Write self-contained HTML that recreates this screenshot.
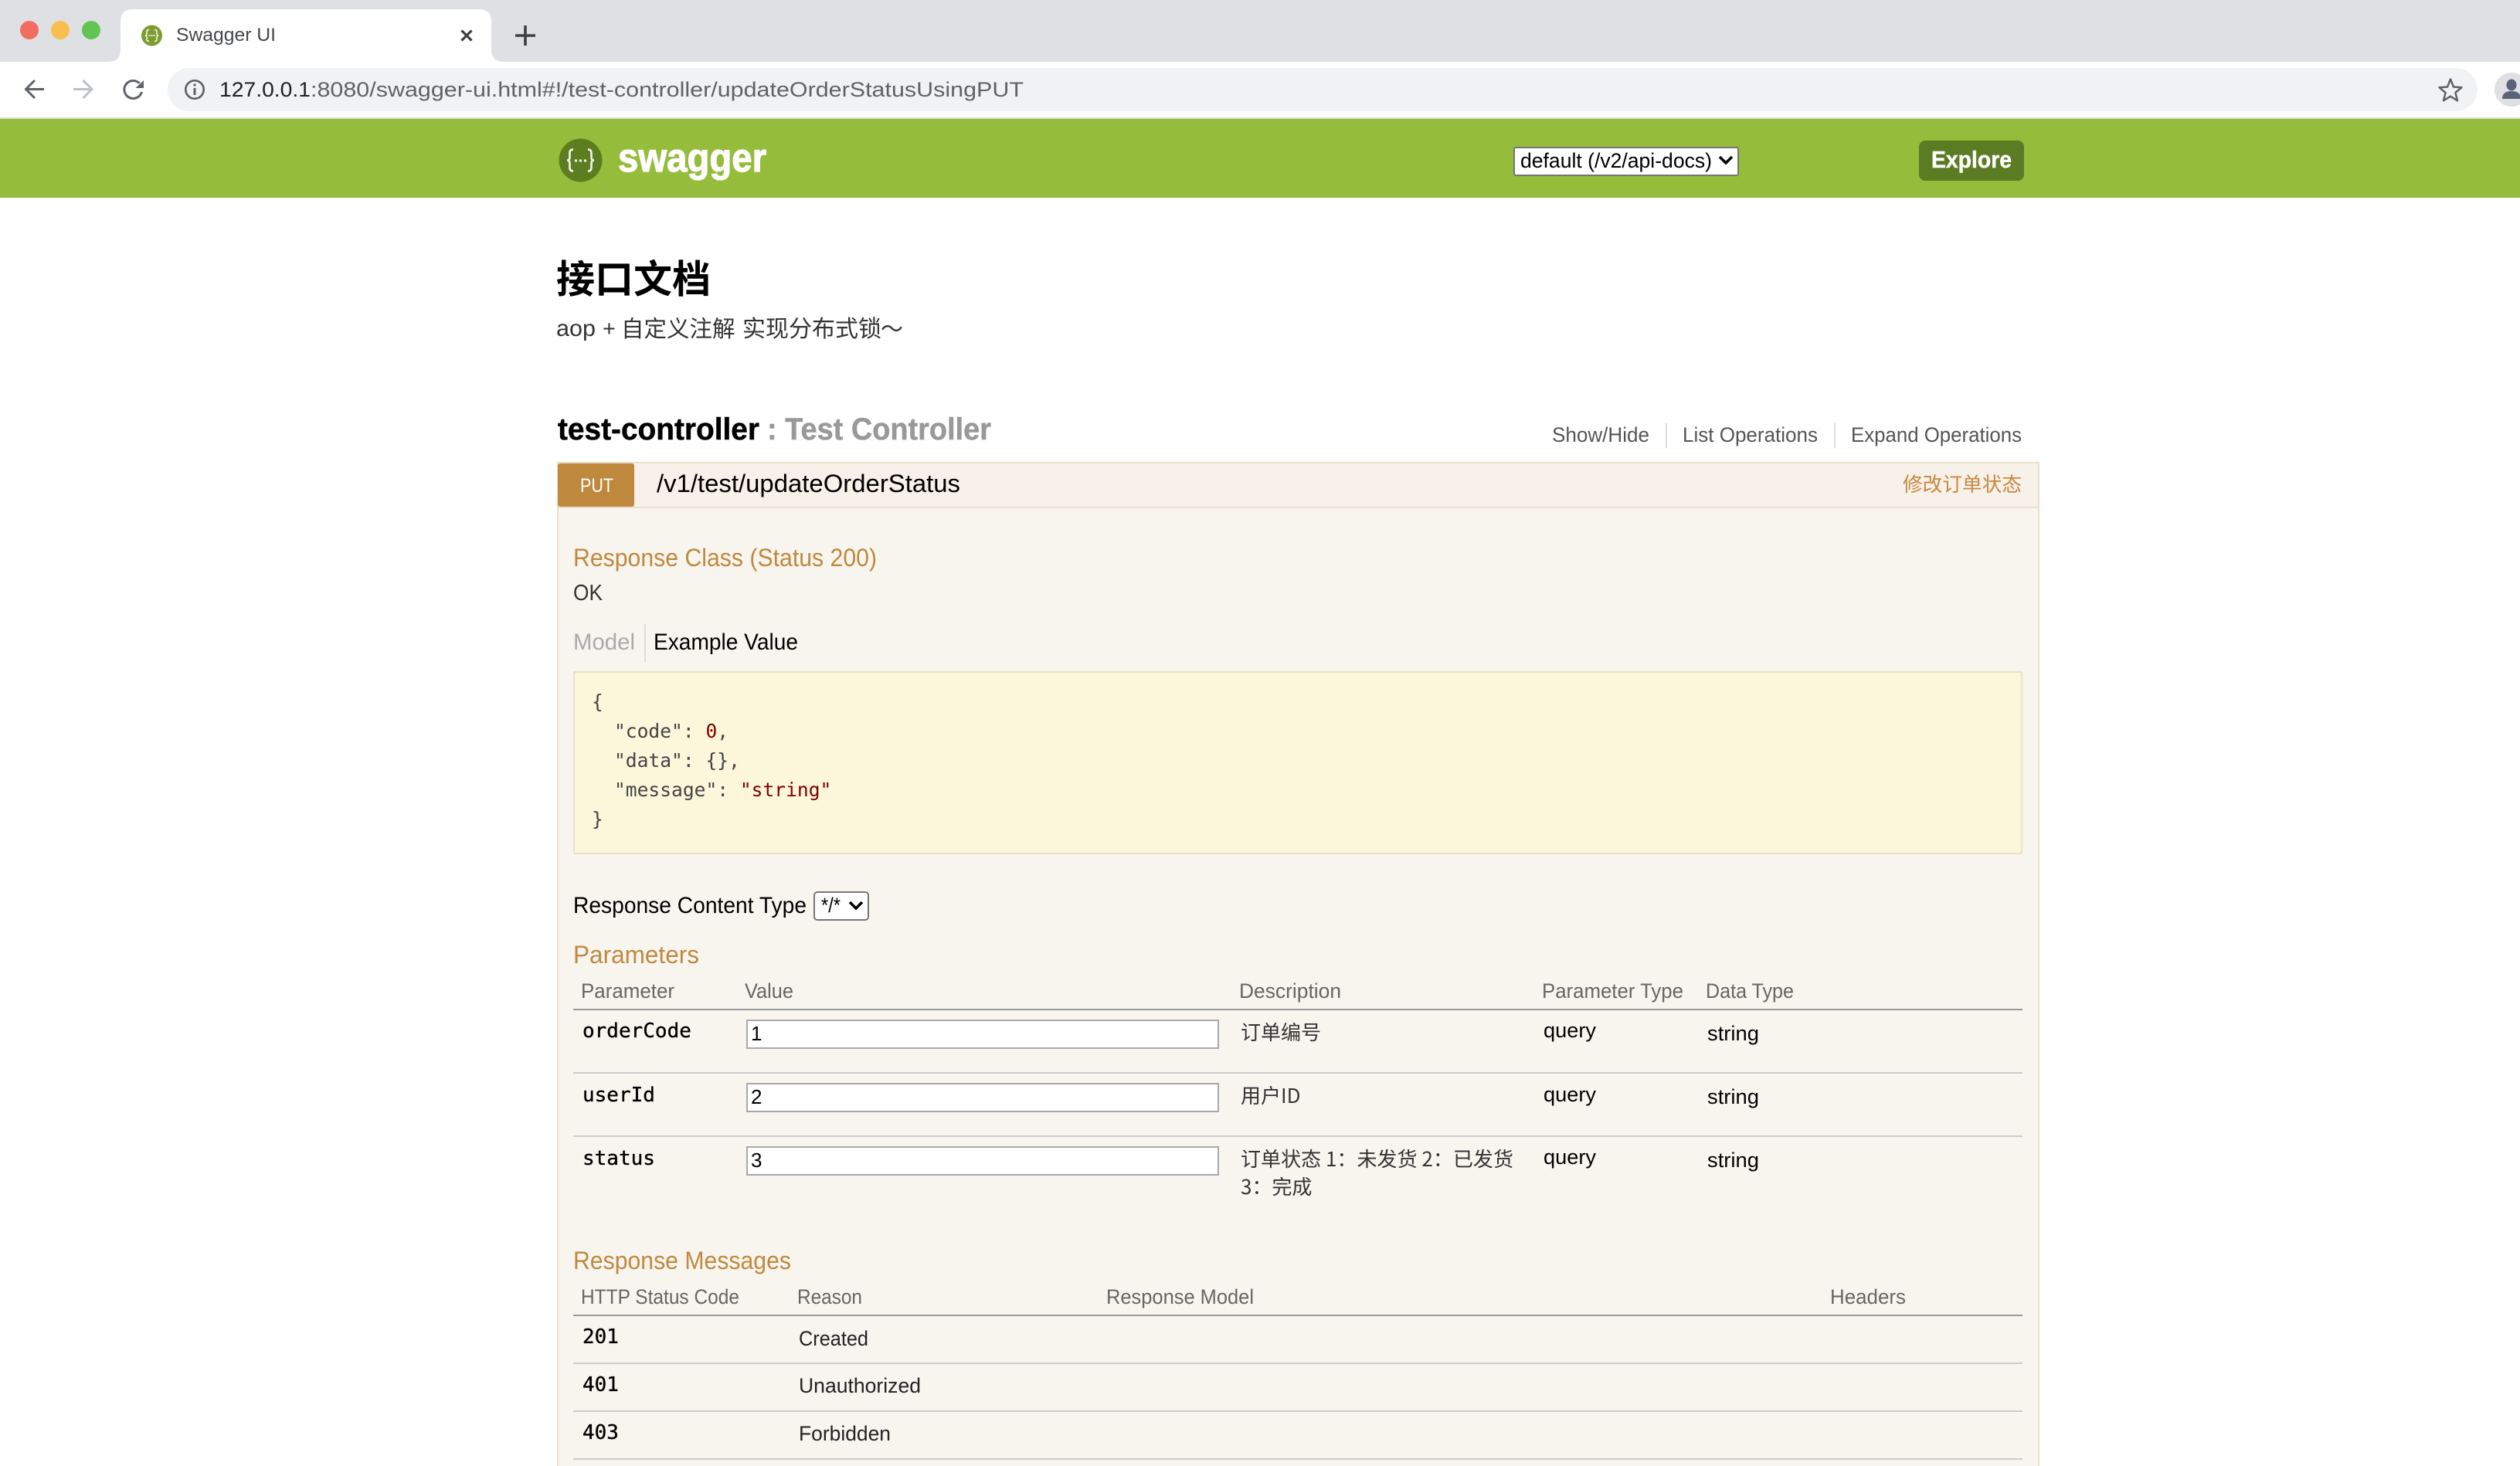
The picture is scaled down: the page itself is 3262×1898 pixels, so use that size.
<!DOCTYPE html>
<html lang="zh">
<head>
<meta charset="utf-8">
<title>Swagger UI</title>
<style>
html,body{margin:0;padding:0;background:#fff;width:3262px;height:1898px;overflow:hidden}
svg{display:block}
text{white-space:pre}
.s{font-family:"Liberation Sans","Noto Sans CJK SC",sans-serif}
.m{font-family:"DejaVu Sans Mono","Liberation Mono",monospace}
.c{font-family:"Noto Sans CJK SC","Liberation Sans",sans-serif}
.b{font-weight:700}
.h{font-size:32px;fill:#c0893f}
.th{font-size:27px;fill:#666}
.td{font-size:27px;fill:#222}
.cj{font-size:26px;fill:#333}
.code{font-size:24.6px;fill:#444}
.p{font-size:27px;fill:#000}
.mn{font-size:26px;fill:#000;stroke:#000;stroke-width:.35px}
.lnk{font-size:27px;fill:#555}
</style>
</head>
<body>
<svg xmlns="http://www.w3.org/2000/svg" width="3262" height="1898" viewBox="0 0 3262 1898">
<!-- browser chrome -->
<rect width="3262" height="80" fill="#dfe0e4"/>
<rect y="80" width="3262" height="72" fill="#fff"/>
<rect y="152" width="3262" height="2" fill="#dcdcdf"/>
<circle cx="38" cy="39" r="12" fill="#f26d60"/>
<circle cx="78" cy="39" r="12" fill="#f8bf4e"/>
<circle cx="118" cy="39" r="12" fill="#61c554"/>
<path d="M140 80Q156 80 156 64V28Q156 12 172 12H620Q636 12 636 28V64Q636 80 652 80Z" fill="#fff"/>
<circle cx="196.500" cy="46" r="13.500" fill="#7d9d2f"/>
<path d="M193 38.500q-3 0-3 2.500v2.500q0 2.500-2 2.500q2 0 2 2.500v2.500q0 2.500 3 2.500M200 38.500q3 0 3 2.500v2.500q0 2.500 2 2.500q-2 0-2 2.500v2.500q0 2.500-3 2.500" fill="none" stroke="#fff" stroke-width="1.400"/>
<circle cx="193.500" cy="46" r="1" fill="#fff"/><circle cx="196.500" cy="46" r="1" fill="#fff"/><circle cx="199.500" cy="46" r="1" fill="#fff"/>
<text class="s" x="228" y="53" font-size="24" fill="#45474a" textLength="129" lengthAdjust="spacingAndGlyphs">Swagger UI</text>
<path d="M597.500 39.500L610.500 52.500M610.500 39.500L597.500 52.500" stroke="#3c4043" stroke-width="3.200" fill="none"/>
<path d="M680 33V59M667 46H693" stroke="#3c4043" stroke-width="3.600" fill="none"/>
<!-- nav -->
<path d="M57 115.500H34M45 104L33.500 115.500L45 127" stroke="#5f6368" stroke-width="3" fill="none"/>
<path d="M95 115.500H118.500M107.500 104L119 115.500L107.500 127" stroke="#bdc1c6" stroke-width="3" fill="none"/>
<path d="M180.500 107.800A11.500 11.500 0 1 0 183.500 119" stroke="#5f6368" stroke-width="3" fill="none"/>
<path d="M186 104V114H175.500Z" fill="#5f6368"/>
<rect x="217" y="88" width="2990" height="56" rx="28" fill="#f1f2f4"/>
<circle cx="252" cy="116" r="11.700" fill="none" stroke="#5f6368" stroke-width="2.700"/>
<rect x="250.500" y="114" width="3" height="9" fill="#5f6368"/><rect x="250.500" y="108.500" width="3" height="3" fill="#5f6368"/>
<text class="s" x="284" y="125" font-size="27" fill="#202124" textLength="118" lengthAdjust="spacingAndGlyphs">127.0.0.1</text>
<text class="s" x="402" y="125" font-size="27" fill="#5f6368" textLength="923" lengthAdjust="spacingAndGlyphs">:8080/swagger-ui.html#!/test-controller/updateOrderStatusUsingPUT</text>
<path d="M3172 102.500L3176 112.500L3186.500 113.200L3178.400 120L3181 130.300L3172 124.700L3163 130.300L3165.600 120L3157.500 113.200L3168 112.500Z" fill="none" stroke="#5f6368" stroke-width="2.500" stroke-linejoin="round"/>
<circle cx="3251" cy="116" r="22" fill="#dfe0e4"/>
<ellipse cx="3251" cy="110" rx="6.500" ry="7.500" fill="#5a6478"/>
<path d="M3239 128Q3239 118 3251 118Q3263 118 3263 128Z" fill="#5a6478"/>
<!-- header bar -->
<rect y="154" width="3262" height="102" fill="#95bc3b"/>
<circle cx="751.500" cy="207.500" r="28" fill="#5c7d20"/>
<path d="M742 193.500q-4.500 0-4.500 4.500v5.500q0 4-3.500 4q3.500 0 3.500 4v5.500q0 4.500 4.500 4.500M761 193.500q4.500 0 4.500 4.500v5.500q0 4 3.500 4q-3.500 0-3.500 4v5.500q0 4.500-4.500 4.500" fill="none" stroke="#edf2e6" stroke-width="2.700"/>
<circle cx="745.500" cy="208" r="1.700" fill="#edf2e6"/><circle cx="751.500" cy="208" r="1.700" fill="#edf2e6"/><circle cx="757.500" cy="208" r="1.700" fill="#edf2e6"/>
<text class="s b" x="800" y="222" font-size="52" fill="#fff" stroke="#fff" stroke-width="1.200" textLength="192" lengthAdjust="spacingAndGlyphs">swagger</text>
<rect x="1960" y="191" width="290" height="36" rx="2" fill="#fff" stroke="#767676" stroke-width="2"/>
<text class="s" x="1968" y="217" font-size="27" fill="#000" textLength="248" lengthAdjust="spacingAndGlyphs">default (/v2/api-docs)</text>
<path d="M2226 203L2234 211L2242 203" fill="none" stroke="#000" stroke-width="3.500"/>
<rect x="2484" y="182" width="136" height="52" rx="8" fill="#5b7c22"/>
<text class="s b" x="2500" y="217" font-size="31" fill="#fff" stroke="#fff" stroke-width=".5" textLength="104" lengthAdjust="spacingAndGlyphs">Explore</text>
<!-- title -->
<text class="c b" x="720" y="379" font-size="50" fill="#000">接口文档</text>
<text class="s" x="720" y="435" font-size="30" fill="#333" textLength="51" lengthAdjust="spacingAndGlyphs">aop</text>
<text class="s" x="780" y="435" font-size="29" fill="#333">+</text>
<text class="c" x="804" y="436" font-size="29.500" fill="#333">自定义注解</text>
<text class="c" x="961" y="436" font-size="30" fill="#333">实现分布式锁</text>
<text class="c" x="1140" y="436" font-size="29" fill="#333">～</text>
<!-- resource heading -->
<text class="s b" x="722" y="569" font-size="40" fill="#000" stroke="#000" stroke-width=".5" textLength="261" lengthAdjust="spacingAndGlyphs">test-controller</text>
<text class="s b" x="993" y="569" font-size="40" fill="#999" stroke="#999" stroke-width=".5" textLength="290" lengthAdjust="spacingAndGlyphs">: Test Controller</text>
<text class="s lnk" x="2009" y="572" textLength="126" lengthAdjust="spacingAndGlyphs">Show/Hide</text>
<rect x="2156" y="548" width="2" height="32" fill="#ddd"/>
<text class="s lnk" x="2178" y="572" textLength="175" lengthAdjust="spacingAndGlyphs">List Operations</text>
<rect x="2374" y="548" width="2" height="32" fill="#ddd"/>
<text class="s lnk" x="2396" y="572" textLength="221" lengthAdjust="spacingAndGlyphs">Expand Operations</text>
<!-- panel -->
<rect x="721" y="598" width="1919" height="1302" fill="#ecdfcb"/>
<rect x="723" y="658" width="1915" height="1240" fill="#f8f5ef"/>
<rect x="723" y="600" width="1915" height="56" fill="#f8f1ea"/>
<rect x="722" y="600" width="99" height="56" rx="3" fill="#be883d"/>
<text class="s" x="751" y="637" font-size="25" fill="#fff" textLength="43" lengthAdjust="spacingAndGlyphs">PUT</text>
<text class="s" x="850" y="637" font-size="32" fill="#000" textLength="393" lengthAdjust="spacingAndGlyphs">/v1/test/updateOrderStatus</text>
<text class="c" x="2463" y="636" font-size="25.700" fill="#c5893f">修改订单状态</text>
<!-- response class -->
<text class="s h" x="742" y="733" textLength="393" lengthAdjust="spacingAndGlyphs">Response Class (Status 200)</text>
<text class="s" x="742" y="777" font-size="29" fill="#333" textLength="38" lengthAdjust="spacingAndGlyphs">OK</text>
<text class="s" x="742" y="841" font-size="30" fill="#aaa" textLength="80" lengthAdjust="spacingAndGlyphs">Model</text>
<rect x="834" y="808" width="2" height="49" fill="#ddd"/>
<text class="s" x="846" y="841" font-size="30" fill="#000" textLength="187" lengthAdjust="spacingAndGlyphs">Example Value</text>
<rect x="743" y="870" width="1874" height="235" fill="#fcf6db" stroke="#e8e2c8" stroke-width="2"/>
<text class="m code" x="766" y="917">{</text>
<text class="m code" x="795" y="955">"code": <tspan fill="#800000">0</tspan>,</text>
<text class="m code" x="795" y="993">"data": {},</text>
<text class="m code" x="795" y="1031">"message": <tspan fill="#800000">"string"</tspan></text>
<text class="m code" x="766" y="1069">}</text>
<text class="s" x="742" y="1182" font-size="30" fill="#000" textLength="302" lengthAdjust="spacingAndGlyphs">Response Content Type</text>
<rect x="1054" y="1155" width="70" height="36" rx="4" fill="#fff" stroke="#767676" stroke-width="2"/>
<text class="s" x="1063" y="1181" font-size="27" fill="#000" textLength="25" lengthAdjust="spacingAndGlyphs">*/*</text>
<path d="M1100 1168L1108 1176L1116 1168" fill="none" stroke="#000" stroke-width="3.500"/>
<!-- parameters -->
<text class="s h" x="742" y="1247" textLength="163" lengthAdjust="spacingAndGlyphs">Parameters</text>
<text class="s th" x="752" y="1292" textLength="121" lengthAdjust="spacingAndGlyphs">Parameter</text>
<text class="s th" x="964" y="1292" textLength="63" lengthAdjust="spacingAndGlyphs">Value</text>
<text class="s th" x="1604" y="1292" textLength="132" lengthAdjust="spacingAndGlyphs">Description</text>
<text class="s th" x="1996" y="1292" textLength="183" lengthAdjust="spacingAndGlyphs">Parameter Type</text>
<text class="s th" x="2208" y="1292" textLength="114" lengthAdjust="spacingAndGlyphs">Data Type</text>
<rect x="742" y="1306" width="1876" height="2" fill="#999"/>
<rect x="742" y="1388" width="1876" height="2" fill="#ccc"/>
<rect x="742" y="1470" width="1876" height="2" fill="#ccc"/>
<text class="m mn" x="754" y="1343">orderCode</text>
<text class="m mn" x="754" y="1426">userId</text>
<text class="m mn" x="754" y="1508">status</text>
<rect x="967" y="1321" width="610" height="36" fill="#fff" stroke="#a9a9a9" stroke-width="2"/>
<rect x="967" y="1403" width="610" height="36" fill="#fff" stroke="#a9a9a9" stroke-width="2"/>
<rect x="967" y="1485" width="610" height="36" fill="#fff" stroke="#a9a9a9" stroke-width="2"/>
<text class="s" x="972" y="1347" font-size="26" fill="#000">1</text>
<text class="s" x="972" y="1429" font-size="26" fill="#000">2</text>
<text class="s" x="972" y="1511" font-size="26" fill="#000">3</text>
<text class="c cj" x="1606" y="1346">订单编号</text>
<text class="c cj" x="1606" y="1428">用户ID</text>
<text class="c cj" x="1606" y="1510" textLength="353" lengthAdjust="spacingAndGlyphs">订单状态 1：未发货 2：已发货</text>
<text class="c cj" x="1606" y="1546">3：完成</text>
<text class="s p" x="1998" y="1343" textLength="68" lengthAdjust="spacingAndGlyphs">query</text>
<text class="s p" x="1998" y="1426" textLength="68" lengthAdjust="spacingAndGlyphs">query</text>
<text class="s p" x="1998" y="1507" textLength="68" lengthAdjust="spacingAndGlyphs">query</text>
<text class="s p" x="2210" y="1347" textLength="67" lengthAdjust="spacingAndGlyphs">string</text>
<text class="s p" x="2210" y="1429" textLength="67" lengthAdjust="spacingAndGlyphs">string</text>
<text class="s p" x="2210" y="1511" textLength="67" lengthAdjust="spacingAndGlyphs">string</text>
<!-- response messages -->
<text class="s h" x="742" y="1643" textLength="282" lengthAdjust="spacingAndGlyphs">Response Messages</text>
<text class="s th" x="752" y="1688" textLength="205" lengthAdjust="spacingAndGlyphs">HTTP Status Code</text>
<text class="s th" x="1032" y="1688" textLength="84" lengthAdjust="spacingAndGlyphs">Reason</text>
<text class="s th" x="1432" y="1688" textLength="191" lengthAdjust="spacingAndGlyphs">Response Model</text>
<text class="s th" x="2369" y="1688" textLength="98" lengthAdjust="spacingAndGlyphs">Headers</text>
<rect x="742" y="1702" width="1876" height="2" fill="#999"/>
<rect x="742" y="1764" width="1876" height="2" fill="#ccc"/>
<rect x="742" y="1826" width="1876" height="2" fill="#ccc"/>
<rect x="742" y="1888" width="1876" height="2" fill="#ccc"/>
<text class="m mn" x="754" y="1739">201</text>
<text class="m mn" x="754" y="1801">401</text>
<text class="m mn" x="754" y="1863">403</text>
<text class="s td" x="1034" y="1742" textLength="90" lengthAdjust="spacingAndGlyphs">Created</text>
<text class="s td" x="1034" y="1803" textLength="158" lengthAdjust="spacingAndGlyphs">Unauthorized</text>
<text class="s td" x="1034" y="1865" textLength="119" lengthAdjust="spacingAndGlyphs">Forbidden</text>
</svg>
</body>
</html>
